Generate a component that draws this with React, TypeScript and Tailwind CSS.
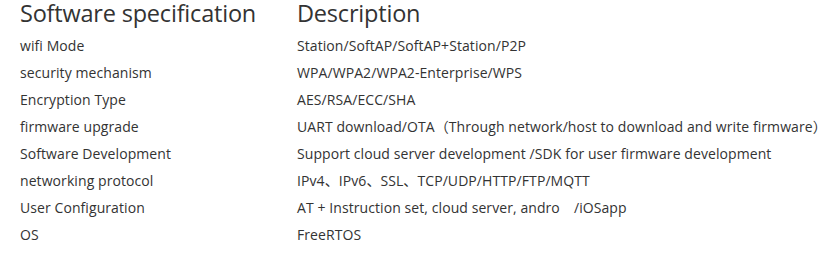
const rows: [string, string][] = [
  ["wifi Mode", "Station/SoftAP/SoftAP+Station/P2P"],
  ["security mechanism", "WPA/WPA2/WPA2-Enterprise/WPS"],
  ["Encryption Type", "AES/RSA/ECC/SHA"],
  ["firmware upgrade", "UART download/OTA\uFF08Through network/host to download and write firmware\uFF09"],
  ["Software Development", "Support cloud server development /SDK for user firmware development"],
  ["networking protocol", "IPv4\u3001IPv6\u3001SSL\u3001TCP/UDP/HTTP/FTP/MQTT"],
  ["User Configuration", "AT + Instruction set, cloud server, andro\u3000/iOSapp"],
  ["OS", "FreeRTOS"],
];

export default function App() {
  return (
    <div
      className="h-[255px] w-[837px] overflow-hidden bg-white pl-5 text-[#333]"
      style={{ fontFamily: '"Open Sans", "Noto Sans CJK SC", sans-serif' }}
    >
      <div className="grid grid-cols-[277px_1fr]">
        <div className="h-[32px] text-[23.5px] leading-[26px] tracking-[-0.2px] whitespace-nowrap">
          Software specification
        </div>
        <div className="h-[32px] text-[23.5px] leading-[26px] tracking-[-0.2px] whitespace-nowrap">
          Description
        </div>
        {rows.map(([k, v]) => (
          <div key={k} className="contents">
            <div className="h-[27px] text-[14px] leading-[27px] tracking-[0.08px] whitespace-nowrap">{k}</div>
            <div className="h-[27px] text-[14px] leading-[27px] tracking-[0.08px] whitespace-nowrap">{v}</div>
          </div>
        ))}
      </div>
    </div>
  );
}
